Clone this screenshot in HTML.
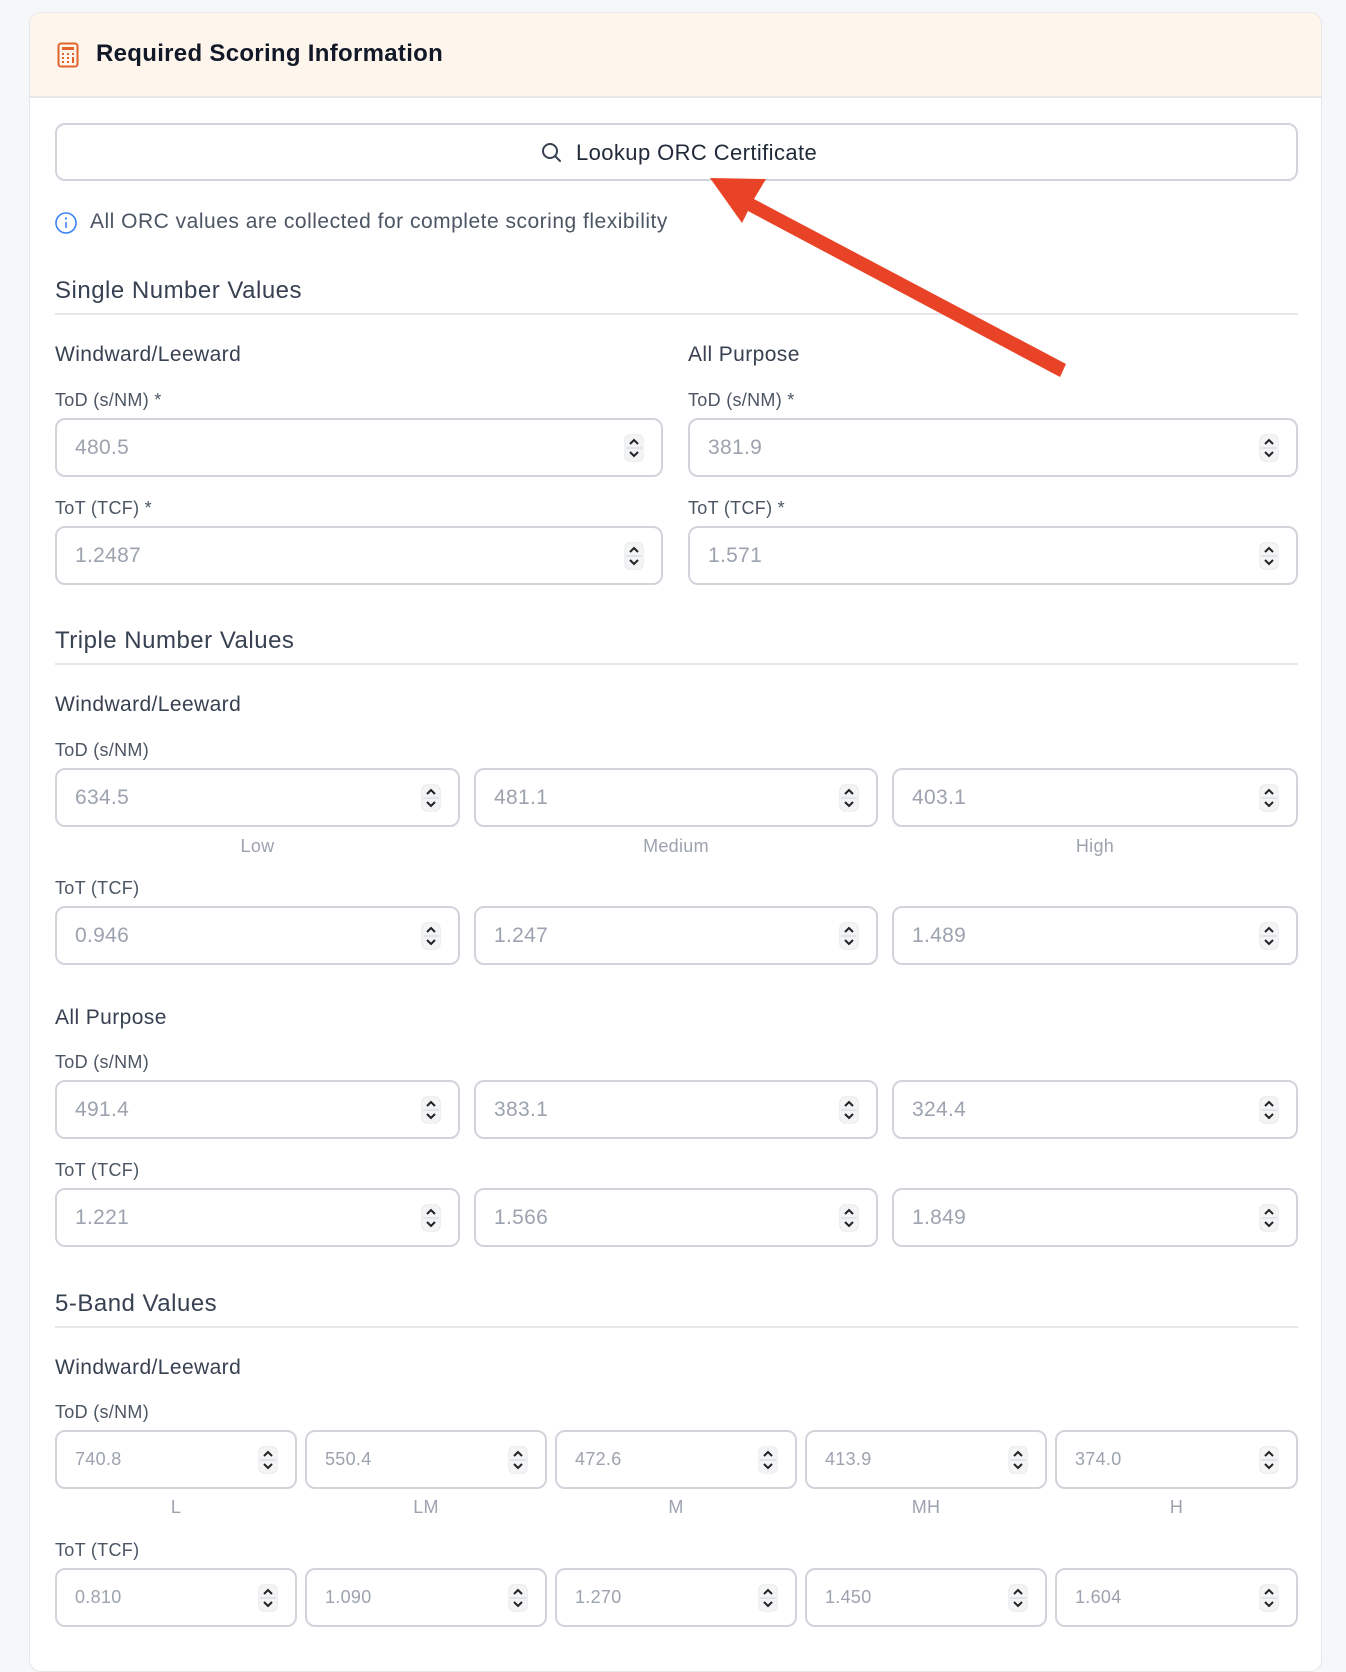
<!DOCTYPE html>
<html><head><meta charset="utf-8"><style>
*{box-sizing:border-box;margin:0;padding:0}
body{width:1346px;height:1648px;background:#f6f7f9;font-family:"Liberation Sans",sans-serif;position:relative;overflow:hidden}
.card{position:absolute;left:29px;top:12px;width:1293px;height:1660px;background:#fff;border:1px solid #e5e7eb;border-radius:12px;overflow:hidden}
.hdr{position:absolute;left:0;top:0;right:0;height:85px;background:#fef6ec;border-bottom:2px solid #e5e7eb}
.a{position:absolute;white-space:nowrap}
.h2{font-size:24px;color:#374151;letter-spacing:0.5px}
.h3{font-size:21px;color:#374151;letter-spacing:0.4px}
.lb{font-size:18px;color:#4b5563;letter-spacing:0.3px}
.rule{position:absolute;left:55px;width:1243px;height:2px;background:#e5e7eb}
.in{position:absolute;border:2px solid #d1d5db;border-radius:10px;height:59px;font-size:21px;color:#9ca3af;padding-left:18px;line-height:55px;background:#fff;letter-spacing:0.3px}
.in.s{font-size:18px}
.sp{position:absolute;right:18px;top:15px;width:18px;height:26px;border-radius:5px;background:#f3f4f6;box-shadow:0 0 1px #999}
.sp svg{display:block}
.cap{position:absolute;font-size:18px;color:#9ca3af;text-align:center;letter-spacing:0.3px}
</style></head><body>
<div class="card"><div class="hdr"></div></div>
<svg class="a" style="left:57px;top:42px" width="22" height="26" viewBox="0 0 22 26"><rect x="1.5" y="1.5" width="19" height="23" rx="2.5" fill="none" stroke="#e4622b" stroke-width="2"/><rect x="5" y="5" width="12" height="3" fill="#e4622b"/><g fill="#e4622b"><rect x="5" y="11" width="2" height="2"/><rect x="10" y="11" width="2" height="2"/><rect x="15" y="11" width="2" height="2"/><rect x="5" y="15" width="2" height="2"/><rect x="10" y="15" width="2" height="2"/><rect x="15" y="15" width="2" height="6"/><rect x="5" y="19" width="2" height="2"/><rect x="10" y="19" width="2" height="2"/></g></svg>
<div class="a" style="left:96px;top:40px;font-size:24px;font-weight:bold;color:#111827;letter-spacing:0.3px">Required Scoring Information</div>
<div class="a" style="left:55px;top:123px;width:1243px;height:58px;border:2px solid #d1d5db;border-radius:10px"></div>
<svg class="a" style="left:541px;top:142px" width="22" height="22" viewBox="0 0 22 22"><circle cx="9" cy="9" r="7" fill="none" stroke="#374151" stroke-width="2"/><path d="M14 14l5 5" stroke="#374151" stroke-width="2" stroke-linecap="round"/></svg>
<div class="a" style="left:576px;top:140px;font-size:22px;color:#1f2937;letter-spacing:0.4px">Lookup ORC Certificate</div>
<svg class="a" style="left:54px;top:211px" width="24" height="24" viewBox="0 0 24 24"><circle cx="12" cy="12" r="10" fill="none" stroke="#3b82f6" stroke-width="1.6"/><path d="M12 11v6" stroke="#3b82f6" stroke-width="1.6"/><circle cx="12" cy="7.5" r="1.1" fill="#3b82f6"/></svg>
<div class="a" style="left:90px;top:210px;font-size:21px;color:#4b5563;letter-spacing:0.5px">All ORC values are collected for complete scoring flexibility</div>

<div class="a h2" style="left:55px;top:277px">Single Number Values</div><div class="rule" style="top:313px"></div>
<div class="a h3" style="left:55px;top:343px">Windward/Leeward</div>
<div class="a h3" style="left:688px;top:343px">All Purpose</div>
<div class="a lb" style="left:55px;top:390px">ToD (s/NM) *</div>
<div class="a lb" style="left:688px;top:390px">ToD (s/NM) *</div>
<div class="a lb" style="left:55px;top:498px">ToT (TCF) *</div>
<div class="a lb" style="left:688px;top:498px">ToT (TCF) *</div>

<div class="a h2" style="left:55px;top:627px">Triple Number Values</div><div class="rule" style="top:663px"></div>
<div class="a h3" style="left:55px;top:693px">Windward/Leeward</div>
<div class="a lb" style="left:55px;top:740px">ToD (s/NM)</div>
<div class="a lb" style="left:55px;top:878px">ToT (TCF)</div>
<div class="a h3" style="left:55px;top:1006px">All Purpose</div>
<div class="a lb" style="left:55px;top:1052px">ToD (s/NM)</div>
<div class="a lb" style="left:55px;top:1160px">ToT (TCF)</div>

<div class="a h2" style="left:55px;top:1290px">5-Band Values</div><div class="rule" style="top:1326px"></div>
<div class="a h3" style="left:55px;top:1356px">Windward/Leeward</div>
<div class="a lb" style="left:55px;top:1402px">ToD (s/NM)</div>
<div class="a lb" style="left:55px;top:1540px">ToT (TCF)</div>

<div id="f"></div>
<svg class="a" style="left:0;top:0" width="1346" height="1648"><polygon points="710,178 766,179 754,199 1066,364 1060,377 748,211 742,223" fill="#e94327"/></svg>
<script>
var f=document.getElementById('f'),h='';
function box(x,w,y,v,s){h+='<div class="in'+(s?' s':'')+'" style="left:'+x+'px;top:'+y+'px;width:'+w+'px">'+v+'<div class="sp"><svg width="18" height="26" viewBox="0 0 18 26"><path d="M5 9l4-4 4 4M5 17l4 4 4-4" fill="none" stroke="#222" stroke-width="2"/><path d="M1 13h16" stroke="#d1d5db"/></svg></div></div>';}
function cap(x,w,y,t){h+='<div class="cap" style="left:'+x+'px;top:'+y+'px;width:'+w+'px">'+t+'</div>';}
box(55,608,418,'480.5');box(688,610,418,'381.9');box(55,608,526,'1.2487');box(688,610,526,'1.571');
var c3=[[55,405],[474,404],[892,406]];
var r3=[[768,['634.5','481.1','403.1']],[906,['0.946','1.247','1.489']],[1080,['491.4','383.1','324.4']],[1188,['1.221','1.566','1.849']]];
r3.forEach(function(r){c3.forEach(function(c,i){box(c[0],c[1],r[0],r[1][i]);});});
['Low','Medium','High'].forEach(function(t,i){cap(c3[i][0],c3[i][1],836,t);});
var c5=[[55,242],[305,242],[555,242],[805,242],[1055,243]];
var r5=[[1430,['740.8','550.4','472.6','413.9','374.0']],[1568,['0.810','1.090','1.270','1.450','1.604']]];
r5.forEach(function(r){c5.forEach(function(c,i){box(c[0],c[1],r[0],r[1][i],1);});});
['L','LM','M','MH','H'].forEach(function(t,i){cap(c5[i][0],c5[i][1],1497,t);});
f.innerHTML=h;
</script>
</body></html>
